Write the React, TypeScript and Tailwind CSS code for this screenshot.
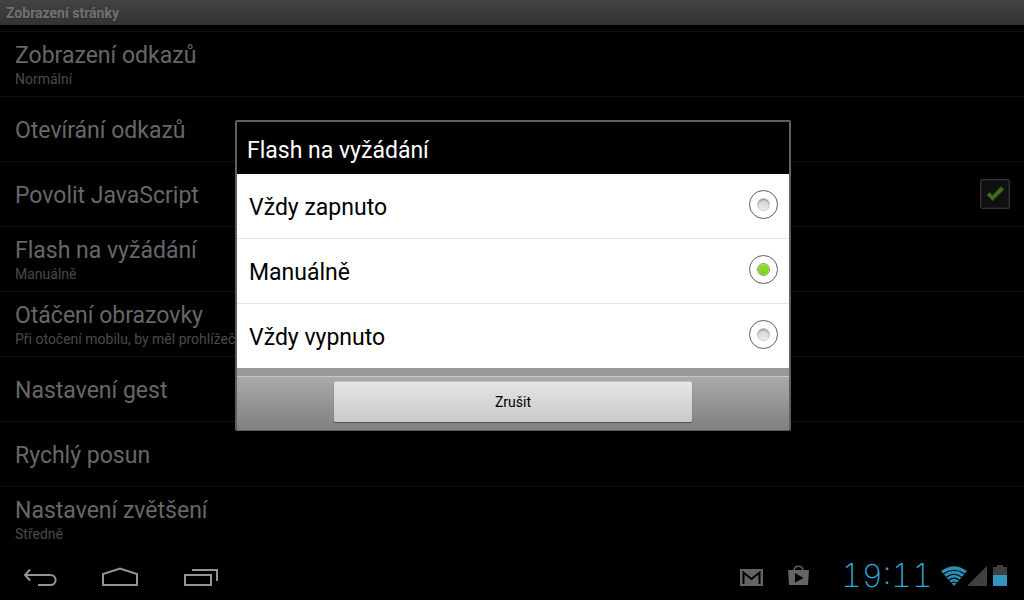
import { useState } from "react";

type Setting = { title: string; summary?: string; toggle?: boolean };

const settings: Setting[] = [
  { title: "Zobrazení odkazů", summary: "Normální" },
  { title: "Otevírání odkazů" },
  { title: "Povolit JavaScript", toggle: true },
  { title: "Flash na vyžádání", summary: "Manuálně" },
  { title: "Otáčení obrazovky", summary: "Při otočení mobilu, by měl prohlížeč" },
  { title: "Nastavení gest" },
  { title: "Rychlý posun" },
  { title: "Nastavení zvětšení", summary: "Středně" },
];

const options = ["Vždy zapnuto", "Manuálně", "Vždy vypnuto"];

function SettingRow({ title, summary, toggle }: Setting) {
  const text = (
    <span className={summary ? "flex min-w-0 flex-col pt-0.5" : "flex min-w-0 flex-col pt-1"}>
      <span className="text-[23px] leading-7 text-[#676767]">{title}</span>
      {summary && (
        <span className="truncate text-sm leading-[18px] text-[#4a4a4a]">{summary}</span>
      )}
    </span>
  );
  return (
    <li className="h-[65px] shrink-0 border-b border-[#111111] last:border-transparent">
      {toggle ? (
        <label className="flex h-full items-center justify-between pr-3.5 pl-[15px]">
          {text}
          <span className="relative flex size-[30px]">
            <input
              type="checkbox"
              defaultChecked
              className="peer size-full appearance-none rounded-xs border border-[#333333] bg-[#101010] inset-ring inset-ring-[#1c1c1c]"
            />
            <svg
              viewBox="0 0 30 30"
              className="pointer-events-none absolute inset-0 hidden peer-checked:block"
              aria-hidden="true"
            >
              <path
                d="M7 16 L9.8 13.6 L12.5 16.4 L21 7.6 L24 10.4 L12.7 21.6 Z"
                fill="#436e18"
                stroke="#2f4b12"
              />
            </svg>
          </span>
        </label>
      ) : (
        <button type="button" className="flex h-full w-full items-center px-[15px] text-left">
          {text}
        </button>
      )}
    </li>
  );
}

function FlashDialog() {
  const [value, setValue] = useState("Manuálně");
  return (
    <div
      role="dialog"
      aria-modal="true"
      aria-labelledby="dialog-title"
      className="w-[556px] max-w-full overflow-hidden rounded-xs border-2 border-b border-[#5e5e5e] bg-black"
    >
      <h2
        id="dialog-title"
        className="flex h-[52px] items-center px-2.5 pt-1.5 text-[23px] leading-7 text-white"
      >
        Flash na vyžádání
      </h2>
      <div role="radiogroup" aria-labelledby="dialog-title" className="divide-y divide-[#e4e4e4] bg-white">
        {options.map((option) => (
          <label
            key={option}
            className="flex h-[65px] items-center justify-between pr-[11px] pl-3 text-[23px] leading-7 text-black last:h-16"
          >
            <span className="pt-1">{option}</span>
            <span className="relative mb-0.5 flex size-[29px] items-center justify-center">
              <input
                type="radio"
                name="flash"
                value={option}
                checked={value === option}
                onChange={() => setValue(option)}
                className="peer absolute inset-0 appearance-none rounded-full border border-[#5f5f5f] bg-white"
              />
              <span className="pointer-events-none relative size-[11px] rounded-full bg-linear-to-b from-[#d0d0d0] to-[#ececec] ring-1 ring-[#c2c2c2] inset-shadow-[0_1px_1px_#8c8c8c] peer-checked:from-[#92e02c] peer-checked:to-[#7fce18] peer-checked:ring-[#8f9b84] peer-checked:inset-shadow-none" />
            </span>
          </label>
        ))}
      </div>
      <div className="h-2 bg-[#999999]" />
      <div className="flex h-[54px] justify-center border-t border-[#c6c6c6] bg-linear-to-b from-[#aaaaaa] to-[#808080] pt-1">
        <button
          type="button"
          className="h-[41px] w-[65%] rounded-xs border-t border-[#c4c4c4] bg-linear-to-b from-[#e6e6e6] to-[#c9c9c9] text-sm text-black shadow-[0_1px_1px_#505050]"
        >
          Zrušit
        </button>
      </div>
    </div>
  );
}

function SystemBar() {
  return (
    <footer className="flex h-12 shrink-0 items-center justify-between bg-black">
      <nav className="flex items-center">
        <button type="button" aria-label="Zpět" className="flex w-20 justify-center">
          <svg width="80" height="48" viewBox="0 0 80 48" fill="none" stroke="#949494" strokeWidth="2">
            <path d="M30 17.5 L25 23 L30 28.5 M25 23 H50 C57.5 23 57.5 33 50 33 H38" />
          </svg>
        </button>
        <button type="button" aria-label="Domů" className="flex w-20 justify-center">
          <svg width="80" height="48" viewBox="0 0 80 48" fill="none" stroke="#949494" strokeWidth="2">
            <path d="M23 33 V22 L40 16.5 L57 22 V33 Z" />
          </svg>
        </button>
        <button type="button" aria-label="Poslední aplikace" className="flex w-20 justify-center">
          <svg width="80" height="48" viewBox="0 0 80 48" fill="none" stroke="#949494" strokeWidth="2">
            <path d="M25 23 H51 V33 H25 Z M32 18 H57 V29" />
          </svg>
        </button>
      </nav>
      <div className="flex items-center pr-4">
        <svg width="23" height="48" viewBox="0 0 23 48" role="img" aria-label="Gmail">
          <rect width="23" height="17" y="17" fill="#646464" />
          <path d="M3.5 32 V20.5 L11.5 27 L19.5 20.5 V32" fill="none" stroke="#000" strokeWidth="2" />
        </svg>
        <svg className="ml-[25px]" width="21" height="48" viewBox="0 0 21 48" role="img" aria-label="Obchod Play">
          <path d="M6 19 C6 12.5 15 12.5 15 19" fill="none" stroke="#646464" strokeWidth="1.5" />
          <path d="M0 18 H21 L20 33 H1 Z" fill="#646464" />
          <path d="M7 21 L15.5 26 L7 30.5 Z" fill="#000" />
        </svg>
        <time className="ml-6 w-[108px] text-center font-[Inter,sans-serif] text-[32px] leading-8 font-extralight text-[#2fa9d6] tabular-nums">
          19:11
        </time>
        <svg width="26" height="48" viewBox="0 0 26 48" role="img" aria-label="Wi-Fi">
          <path d="M0 19 Q13 9.5 26 19 L13 34 Z" fill="#2d8db5" />
          <g fill="none" stroke="#000" strokeWidth="1.1">
            <path d="M2.5 21.8 Q13 14.6 23.5 21.8" />
            <path d="M5.5 25 Q13 19.5 20.5 25" />
            <path d="M8 28 Q13 24.3 18 28" />
            <path d="M10.5 31 Q13 29 15.5 31" />
          </g>
        </svg>
        <svg width="21" height="48" viewBox="0 0 21 48" role="img" aria-label="Signál">
          <path d="M0 34 L20 14 V34 Z" fill="#404040" />
        </svg>
        <svg className="ml-[5px]" width="15" height="48" viewBox="0 0 15 48" role="img" aria-label="Baterie">
          <path d="M0 15 H4 V13 H10 V15 H14 V25 H0 Z" fill="#404040" />
          <path d="M0 23 H14 V34 H0 Z" fill="#3595bf" />
        </svg>
      </div>
    </footer>
  );
}

export default function App() {
  return (
    <div className="flex h-screen flex-col overflow-hidden bg-black font-[Roboto,sans-serif]">
      <div className="relative flex min-h-0 flex-1 flex-col overflow-hidden">
        <header className="flex h-[25px] shrink-0 items-center bg-linear-to-b from-[#434343] to-[#323232] px-1.5">
          <h1 className="text-sm leading-5 font-bold text-[#727272] text-shadow-xs">
            Zobrazení stránky
          </h1>
        </header>
        <main className="min-h-0 flex-1 overflow-hidden">
          <ul className="mt-[6px] flex flex-col border-t border-[#111111]">
            {settings.map((setting) => (
              <SettingRow key={setting.title} {...setting} />
            ))}
          </ul>
        </main>
        <div className="absolute inset-0 flex items-center justify-center pb-0.5 pl-0.5">
          <FlashDialog />
        </div>
      </div>
      <SystemBar />
    </div>
  );
}
